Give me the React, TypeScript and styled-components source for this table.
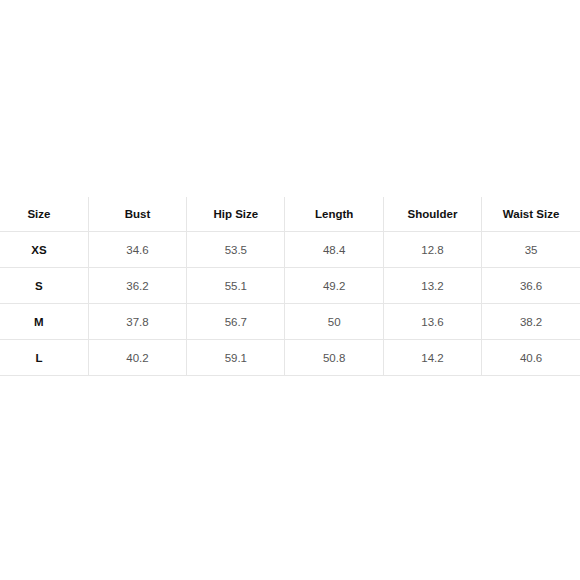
import { VFC } from 'react';
import styled, { createGlobalStyle } from 'styled-components';

const GlobalStyle = createGlobalStyle`
  html, body {
    margin: 0;
    padding: 0;
    background: #ffffff;
    overflow: hidden;
  }
`;

const columns = ['Size', 'Bust', 'Hip Size', 'Length', 'Shoulder', 'Waist Size'];

const rows: string[][] = [
  ['XS', '34.6', '53.5', '48.4', '12.8', '35'],
  ['S', '36.2', '55.1', '49.2', '13.2', '36.6'],
  ['M', '37.8', '56.7', '50', '13.6', '38.2'],
  ['L', '40.2', '59.1', '50.8', '14.2', '40.6'],
];

const SizeChart: VFC = () => {
  return (
    <StyledPage>
      <Table>
        <thead>
          <tr>
            {columns.map((col) => (
              <HeadCell key={col}>{col}</HeadCell>
            ))}
          </tr>
        </thead>
        <tbody>
          {rows.map((row) => (
            <tr key={row[0]}>
              {row.map((value, i) => (
                <Cell key={i} $label={i === 0}>
                  {value}
                </Cell>
              ))}
            </tr>
          ))}
        </tbody>
      </Table>
    </StyledPage>
  );
};

export default function App() {
  return (
    <>
      <GlobalStyle />
      <SizeChart />
    </>
  );
}

const StyledPage = styled.div`
  width: 580px;
  height: 580px;
  padding-top: 197px;
  box-sizing: border-box;
  overflow: hidden;
`;

const Table = styled.table`
  width: 590px;
  margin-left: -10px;
  table-layout: fixed;
  border-collapse: collapse;
  font-family: 'Liberation Sans', Arial, sans-serif;
  font-size: 11.5px;
  text-align: center;
`;

const HeadCell = styled.th`
  height: 34px;
  padding: 0;
  font-weight: bold;
  color: #111111;
  border-bottom: 1px solid #e6e6e6;
  & + & {
    border-left: 1px solid #e6e6e6;
  }
`;

const Cell = styled.td<{ $label?: boolean }>`
  height: 35px;
  padding: 0;
  font-weight: ${({ $label }) => ($label ? 'bold' : 'normal')};
  color: ${({ $label }) => ($label ? '#111111' : '#555555')};
  border-bottom: 1px solid #e6e6e6;
  & + & {
    border-left: 1px solid #e6e6e6;
  }
`;
